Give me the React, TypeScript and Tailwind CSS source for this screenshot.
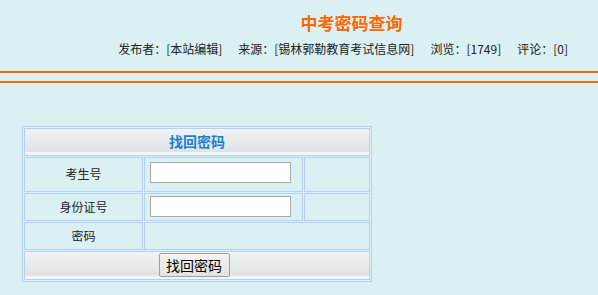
import React from 'react'

const font = { fontFamily: '"Noto Sans CJK SC", "Noto Sans", sans-serif' }

function Meta() {
  const items = [
    ['发布者：', '[本站编辑]'],
    ['来源：', '[锡林郭勒教育考试信息网]'],
    ['浏览：', '[1749]'],
    ['评论：', '[0]'],
  ]
  return (
    <div className="flex justify-end pr-[30px] text-[12px] leading-[14px] text-[#222]">
      {items.map(([k, v], i) => (
        <span key={i} className={i === 0 ? '' : 'ml-[16px]'}>
          {k}
          {v}
        </span>
      ))}
    </div>
  )
}

const cell = 'border border-[#b6d0f3]'
const bar = 'border border-[#b6d0f3] bg-[linear-gradient(#f1f4f5,#dbe0e2)] shadow-[inset_0_-3px_0_#f3f5f6]'

export default function App() {
  return (
    <div className="min-h-[295px] w-full bg-[#daf0f2]" style={font}>
      {/* header */}
      <div className="pt-[13px] pl-[105px] text-center text-[17px] font-bold leading-[20px] text-[#ff6600]">中考密码查询</div>
      <div className="mt-[9px]">
        <Meta />
      </div>
      <div className="mt-[15px] h-[2px] bg-[#ff6600]" />
      <div className="mt-[8px] h-[2px] bg-[#ff6600]" />

      {/* form */}
      <div className="ml-[22px] mt-[43px] w-[350px] border border-[#b6d0f3] p-px">
        <div className="grid grid-cols-[119px_159px_66px] grid-rows-[28px_35px_28px_28px_29px] gap-px text-[12px] text-[#222]">
          <div className={`${bar} col-span-3 flex items-center justify-center pb-[2px] text-[14px] font-bold text-[#1b7fd3]`}>找回密码</div>

          <div className={`${cell} flex items-center justify-center pb-[2px]`}>考生号</div>
          <div className={`${cell} flex items-center pl-[5px] pb-[4px]`}>
            <input className="h-[21px] w-[141px] border border-[#a9a9a9] bg-white px-1 outline-none" />
          </div>
          <div className={cell} />

          <div className={`${cell} flex items-center justify-center pb-[1px]`}>身份证号</div>
          <div className={`${cell} flex items-center pl-[5px] pb-[2px]`}>
            <input className="h-[21px] w-[141px] border border-[#a9a9a9] bg-white px-1 outline-none" />
          </div>
          <div className={cell} />

          <div className={`${cell} flex items-center justify-center`}>密码</div>
          <div className={`${cell} col-span-2`} />

          <div className={`${bar} col-span-3 flex items-start justify-center pt-[1px] pr-[6px]`}>
            <button className="h-[24px] w-[71px] rounded-[2px] border border-[#9f9f9f] bg-[linear-gradient(#f4f4f4,#e3e3e3)] text-[14px] leading-[20px] text-black">
              找回密码
            </button>
          </div>
        </div>
      </div>
    </div>
  )
}
